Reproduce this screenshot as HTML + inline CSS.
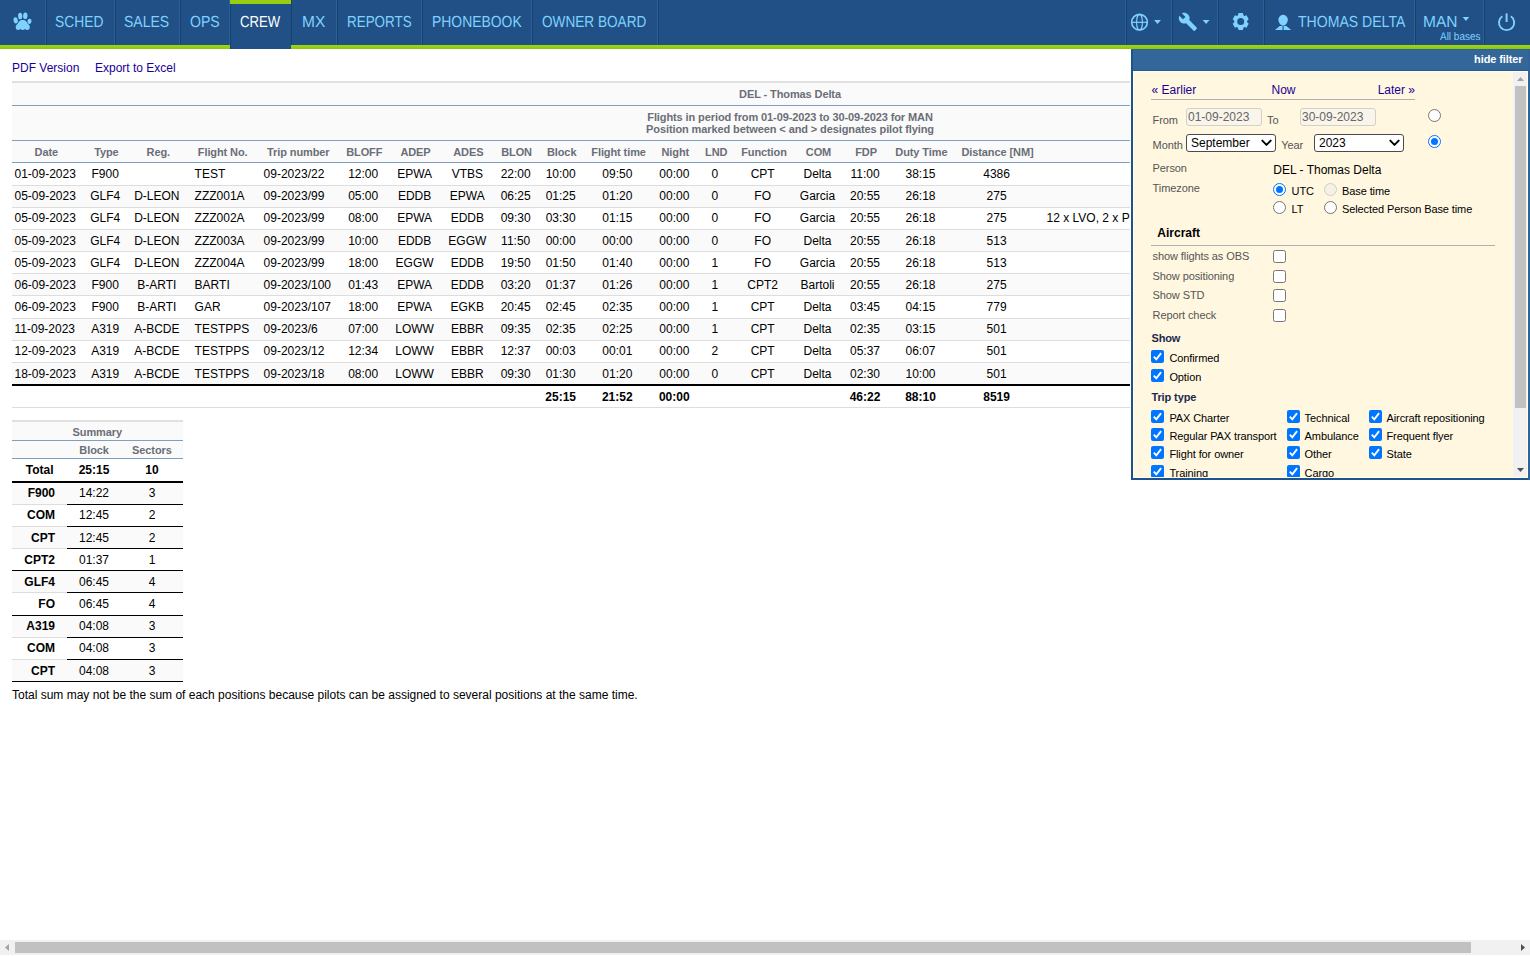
<!DOCTYPE html>
<html><head><meta charset="utf-8"><title>Leon</title><style>
html,body{margin:0;padding:0;background:#fff;overflow:hidden;}
body{width:1530px;height:956px;overflow:hidden;position:relative;font-family:"Liberation Sans", sans-serif;}
.r{position:absolute;}
.t{position:absolute;white-space:nowrap;font-family:"Liberation Sans", sans-serif;}
.nv{text-rendering:geometricPrecision;}
</style></head><body>
<div class="r" style="left:0px;top:0px;width:1530px;height:45px;background:#215086;"></div>
<div class="r" style="left:0px;top:45px;width:1530px;height:4px;background:#97cf10;background:linear-gradient(#a0d80e,#96ce10 50%,#8cc60a);"></div>
<div class="r" style="left:45px;top:0px;width:1px;height:45px;background:#2a5f98;"></div>
<div class="r" style="left:46px;top:0px;width:1px;height:45px;background:#15426f;"></div>
<div class="r" style="left:114px;top:0px;width:1px;height:45px;background:#2a5f98;"></div>
<div class="r" style="left:115px;top:0px;width:1px;height:45px;background:#15426f;"></div>
<div class="r" style="left:179px;top:0px;width:1px;height:45px;background:#2a5f98;"></div>
<div class="r" style="left:180px;top:0px;width:1px;height:45px;background:#15426f;"></div>
<div class="r" style="left:229px;top:0px;width:1px;height:45px;background:#2a5f98;"></div>
<div class="r" style="left:230px;top:0px;width:1px;height:45px;background:#15426f;"></div>
<div class="r" style="left:290px;top:0px;width:1px;height:45px;background:#2a5f98;"></div>
<div class="r" style="left:291px;top:0px;width:1px;height:45px;background:#15426f;"></div>
<div class="r" style="left:336px;top:0px;width:1px;height:45px;background:#2a5f98;"></div>
<div class="r" style="left:337px;top:0px;width:1px;height:45px;background:#15426f;"></div>
<div class="r" style="left:421px;top:0px;width:1px;height:45px;background:#2a5f98;"></div>
<div class="r" style="left:422px;top:0px;width:1px;height:45px;background:#15426f;"></div>
<div class="r" style="left:531px;top:0px;width:1px;height:45px;background:#2a5f98;"></div>
<div class="r" style="left:532px;top:0px;width:1px;height:45px;background:#15426f;"></div>
<div class="r" style="left:657px;top:0px;width:1px;height:45px;background:#2a5f98;"></div>
<div class="r" style="left:658px;top:0px;width:1px;height:45px;background:#15426f;"></div>
<div class="r" style="left:1125px;top:0px;width:1px;height:45px;background:#2a5f98;"></div>
<div class="r" style="left:1126px;top:0px;width:1px;height:45px;background:#15426f;"></div>
<div class="r" style="left:1171px;top:0px;width:1px;height:45px;background:#2a5f98;"></div>
<div class="r" style="left:1172px;top:0px;width:1px;height:45px;background:#15426f;"></div>
<div class="r" style="left:1217px;top:0px;width:1px;height:45px;background:#2a5f98;"></div>
<div class="r" style="left:1218px;top:0px;width:1px;height:45px;background:#15426f;"></div>
<div class="r" style="left:1263px;top:0px;width:1px;height:45px;background:#2a5f98;"></div>
<div class="r" style="left:1264px;top:0px;width:1px;height:45px;background:#15426f;"></div>
<div class="r" style="left:1414px;top:0px;width:1px;height:45px;background:#2a5f98;"></div>
<div class="r" style="left:1415px;top:0px;width:1px;height:45px;background:#15426f;"></div>
<div class="r" style="left:1483px;top:0px;width:1px;height:45px;background:#2a5f98;"></div>
<div class="r" style="left:1484px;top:0px;width:1px;height:45px;background:#15426f;"></div>
<div class="r" style="left:231px;top:0px;width:60px;height:49px;background:#215086;"></div>
<div class="r" style="left:230px;top:4px;width:1px;height:45px;background:#15426f;"></div>
<div class="r" style="left:230px;top:0px;width:61px;height:4px;background:#97cf10;"></div>
<div class="t nv" id="nv0" style="left:55.46px;top:14px;font-size:16px;line-height:17px;color:#7fd2ff;transform:scaleX(0.8641);transform-origin:0 0;">SCHED</div>
<div class="t nv" id="nv1" style="left:124.25px;top:14px;font-size:16px;line-height:17px;color:#7fd2ff;transform:scaleX(0.8755);transform-origin:0 0;">SALES</div>
<div class="t nv" id="nv2" style="left:189.52px;top:14px;font-size:16px;line-height:17px;color:#7fd2ff;transform:scaleX(0.8811);transform-origin:0 0;">OPS</div>
<div class="t nv" id="nv3" style="left:239.55px;top:14px;font-size:16px;line-height:17px;color:#ffffff;transform:scaleX(0.8204);transform-origin:0 0;">CREW</div>
<div class="t nv" id="nv4" style="left:302.35px;top:14px;font-size:16px;line-height:17px;color:#7fd2ff;transform:scaleX(0.9701);transform-origin:0 0;">MX</div>
<div class="t nv" id="nv5" style="left:346.97px;top:14px;font-size:16px;line-height:17px;color:#7fd2ff;transform:scaleX(0.8388);transform-origin:0 0;">REPORTS</div>
<div class="t nv" id="nv6" style="left:431.84px;top:14px;font-size:16px;line-height:17px;color:#7fd2ff;transform:scaleX(0.8696);transform-origin:0 0;">PHONEBOOK</div>
<div class="t nv" id="nv7" style="left:542.25px;top:14px;font-size:16px;line-height:17px;color:#7fd2ff;transform:scaleX(0.8500);transform-origin:0 0;">OWNER BOARD</div>
<div class="t nv" id="nv8" style="left:1298.24px;top:14px;font-size:16px;line-height:17px;color:#7fd2ff;transform:scaleX(0.8790);transform-origin:0 0;">THOMAS DELTA</div>
<div class="t nv" id="nv9" style="left:1422.64px;top:14px;font-size:16px;line-height:17px;color:#7fd2ff;transform:scaleX(0.9707);transform-origin:0 0;">MAN</div>
<div class="t nv" id="nvab" style="left:1440.38px;top:31px;font-size:11px;line-height:12px;color:#7fd2ff;transform:scaleX(0.9056);transform-origin:0 0;">All bases</div>
<svg class="r" style="left:0;top:0" width="1530" height="49" viewBox="0 0 1530 49">
<g fill="#7fd2ff">
<ellipse cx="15.7" cy="20.4" rx="2.15" ry="3.15" transform="rotate(-8 15.7 20.4)"/>
<ellipse cx="20.15" cy="16.05" rx="2.1" ry="3.2" transform="rotate(-3 20.15 16.05)"/>
<ellipse cx="25.3" cy="15.8" rx="2.2" ry="3.25" transform="rotate(3 25.3 15.8)"/>
<ellipse cx="29.5" cy="21.3" rx="2.05" ry="2.65" transform="rotate(8 29.5 21.3)"/>
<path d="M22.7 20.1C26.1 20.1 26.6 22.3 27.6 23.4C29.3 24.9 29.9 26 29.8 27.4C29.7 29.2 28.3 30 27 29.9C26 29.8 25.5 29.3 25.1 29C24.4 29.6 23.6 29.9 22.7 29.9C21.8 29.9 21 29.6 20.3 29C19.9 29.3 19.4 29.8 18.4 29.9C17.1 30 15.8 29.2 15.7 27.4C15.6 26 16.2 24.9 17.9 23.4C18.9 22.3 19.3 20.1 22.7 20.1Z"/>
</g>
<g fill="none" stroke="#7fd2ff">
<circle cx="1139.5" cy="22.2" r="7.8" stroke-width="1.6"/>
<ellipse cx="1139.5" cy="22.2" rx="2.9" ry="7.8" stroke-width="1.1"/>
<path d="M1131.7 22.3h15.6" stroke-width="1.2"/>
</g>
<path fill="#7fd2ff" d="M1154.1 19.9h6.8l-3.4 4.2zM1202.7 19.9h6.800l-3.400 4.200zM1462.700 16.900h6.500l-3.250 4.200z"/>
<g transform="translate(1178 11.9) scale(0.83)"><path fill="#7fd2ff" d="M22.7 19l-9.1-9.1c.9-2.300.4-5-1.500-6.900-2-2-5-2.400-7.400-1.300L9 6 6 9 1.600 4.700C.400 7.100.900 10.100 2.900 12.100c1.900 1.900 4.600 2.400 6.900 1.500l9.100 9.100c.4.400 1 .4 1.400 0l2.300-2.300c.5-.4.500-1.100.1-1.400z"/></g>
<path fill="#7fd2ff" fill-rule="evenodd" d="M1238.00 15.23 L1238.48 13.02 L1242.92 13.02 L1243.40 15.23 L1244.46 15.88 L1246.49 15.21 L1248.71 19.31 L1247.16 20.85 L1247.16 22.15 L1248.71 23.69 L1246.49 27.79 L1244.46 27.12 L1243.40 27.77 L1242.92 29.98 L1238.48 29.98 L1238.00 27.77 L1236.94 27.12 L1234.91 27.79 L1232.69 23.69 L1234.24 22.15 L1234.24 20.85 L1232.69 19.31 L1234.91 15.21 L1236.94 15.88Z M1244.20 21.50 A3.5 3.5 0 1 0 1237.20 21.50 A3.5 3.5 0 1 0 1244.20 21.50Z"/>
<g fill="#7fd2ff">
<path d="M1283.1 14.7C1285.2 14.7 1287.3 16.3 1287.8 19.1C1288.1 21.5 1286 25.8 1283.1 25.8C1280.200 25.800 1278.100 21.500 1278.400 19.100C1278.900 16.300 1281 14.700 1283.100 14.700Z"/>
<path d="M1275 30.100L1279.700 26.100L1282.500 26.100L1282.500 30.100Z"/>
<path d="M1291.100 30.100L1286.400 26.100L1283.600 26.100L1283.600 30.100Z"/>
</g>
<g fill="none" stroke="#7fd2ff" stroke-width="1.9">
<path d="M1502.35 16.20A7.6 7.6 0 1 0 1510.85 16.20"/>
<path d="M1506.600 13.400V22" stroke-width="2"/>
</g>
</svg>
<div class="t" style="left:12px;top:61px;font-size:12px;line-height:14px;color:#1a0096;">PDF Version</div>
<div class="t" style="left:95px;top:61px;font-size:12px;line-height:14px;color:#1a0096;">Export to Excel</div>
<div class="r" style="left:12px;top:81px;width:1518px;height:2px;background:#e0e0e0;"></div>
<div class="r" style="left:12px;top:83px;width:1518px;height:79px;background:#fafafa;"></div>
<div class="r" style="left:12px;top:105px;width:1518px;height:1px;background:#7f9fc2;"></div>
<div class="r" style="left:12px;top:140px;width:1518px;height:1px;background:#7f9fc2;"></div>
<div class="r" style="left:12px;top:162px;width:1518px;height:1px;background:#7f9fc2;"></div>
<div class="t" style="left:490.0px;width:600px;text-align:center;top:88px;font-size:11px;line-height:12px;font-weight:700;letter-spacing:-0.1px;color:#6a6e78;">DEL - Thomas Delta</div>
<div class="t" style="left:490.0px;width:600px;text-align:center;top:111px;font-size:11px;line-height:12px;font-weight:700;letter-spacing:-0.1px;color:#6a6e78;">Flights in period from 01-09-2023 to 30-09-2023 for MAN</div>
<div class="t" style="left:490.0px;width:600px;text-align:center;top:123px;font-size:11px;line-height:12px;font-weight:700;letter-spacing:-0.1px;color:#6a6e78;">Position marked between &lt; and &gt; designates pilot flying</div>
<div class="t" style="left:-53.7px;width:200px;text-align:center;top:146px;font-size:11px;line-height:12px;font-weight:700;letter-spacing:-0.1px;color:#6a6e78;">Date</div>
<div class="t" style="left:6.400000000000006px;width:200px;text-align:center;top:146px;font-size:11px;line-height:12px;font-weight:700;letter-spacing:-0.1px;color:#6a6e78;">Type</div>
<div class="t" style="left:58.30000000000001px;width:200px;text-align:center;top:146px;font-size:11px;line-height:12px;font-weight:700;letter-spacing:-0.1px;color:#6a6e78;">Reg.</div>
<div class="t" style="left:122.69999999999999px;width:200px;text-align:center;top:146px;font-size:11px;line-height:12px;font-weight:700;letter-spacing:-0.1px;color:#6a6e78;">Flight No.</div>
<div class="t" style="left:198.3px;width:200px;text-align:center;top:146px;font-size:11px;line-height:12px;font-weight:700;letter-spacing:-0.1px;color:#6a6e78;">Trip number</div>
<div class="t" style="left:264.3px;width:200px;text-align:center;top:146px;font-size:11px;line-height:12px;font-weight:700;letter-spacing:-0.1px;color:#6a6e78;">BLOFF</div>
<div class="t" style="left:315.5px;width:200px;text-align:center;top:146px;font-size:11px;line-height:12px;font-weight:700;letter-spacing:-0.1px;color:#6a6e78;">ADEP</div>
<div class="t" style="left:368.3px;width:200px;text-align:center;top:146px;font-size:11px;line-height:12px;font-weight:700;letter-spacing:-0.1px;color:#6a6e78;">ADES</div>
<div class="t" style="left:416.6px;width:200px;text-align:center;top:146px;font-size:11px;line-height:12px;font-weight:700;letter-spacing:-0.1px;color:#6a6e78;">BLON</div>
<div class="t" style="left:461.70000000000005px;width:200px;text-align:center;top:146px;font-size:11px;line-height:12px;font-weight:700;letter-spacing:-0.1px;color:#6a6e78;">Block</div>
<div class="t" style="left:518.6px;width:200px;text-align:center;top:146px;font-size:11px;line-height:12px;font-weight:700;letter-spacing:-0.1px;color:#6a6e78;">Flight time</div>
<div class="t" style="left:575.3px;width:200px;text-align:center;top:146px;font-size:11px;line-height:12px;font-weight:700;letter-spacing:-0.1px;color:#6a6e78;">Night</div>
<div class="t" style="left:616.2px;width:200px;text-align:center;top:146px;font-size:11px;line-height:12px;font-weight:700;letter-spacing:-0.1px;color:#6a6e78;">LND</div>
<div class="t" style="left:664.0px;width:200px;text-align:center;top:146px;font-size:11px;line-height:12px;font-weight:700;letter-spacing:-0.1px;color:#6a6e78;">Function</div>
<div class="t" style="left:718.5px;width:200px;text-align:center;top:146px;font-size:11px;line-height:12px;font-weight:700;letter-spacing:-0.1px;color:#6a6e78;">COM</div>
<div class="t" style="left:766.1px;width:200px;text-align:center;top:146px;font-size:11px;line-height:12px;font-weight:700;letter-spacing:-0.1px;color:#6a6e78;">FDP</div>
<div class="t" style="left:821.4px;width:200px;text-align:center;top:146px;font-size:11px;line-height:12px;font-weight:700;letter-spacing:-0.1px;color:#6a6e78;">Duty Time</div>
<div class="t" style="left:897.5px;width:200px;text-align:center;top:146px;font-size:11px;line-height:12px;font-weight:700;letter-spacing:-0.1px;color:#6a6e78;">Distance [NM]</div>
<div class="r" style="left:12px;top:185px;width:1518px;height:1px;background:#dddddd;"></div>
<div class="t" style="left:14.5px;top:167px;font-size:12px;line-height:14px;color:#000;">01-09-2023</div>
<div class="t" style="left:5.200000000000003px;width:200px;text-align:center;top:167px;font-size:12px;line-height:14px;color:#000;">F900</div>
<div class="t" style="left:194.6px;top:167px;font-size:12px;line-height:14px;color:#000;">TEST</div>
<div class="t" style="left:263.6px;top:167px;font-size:12px;line-height:14px;color:#000;">09-2023/22</div>
<div class="t" style="left:263.2px;width:200px;text-align:center;top:167px;font-size:12px;line-height:14px;color:#000;">12:00</div>
<div class="t" style="left:314.6px;width:200px;text-align:center;top:167px;font-size:12px;line-height:14px;color:#000;">EPWA</div>
<div class="t" style="left:367.3px;width:200px;text-align:center;top:167px;font-size:12px;line-height:14px;color:#000;">VTBS</div>
<div class="t" style="left:415.70000000000005px;width:200px;text-align:center;top:167px;font-size:12px;line-height:14px;color:#000;">22:00</div>
<div class="t" style="left:460.70000000000005px;width:200px;text-align:center;top:167px;font-size:12px;line-height:14px;color:#000;">10:00</div>
<div class="t" style="left:517.3px;width:200px;text-align:center;top:167px;font-size:12px;line-height:14px;color:#000;">09:50</div>
<div class="t" style="left:574.3px;width:200px;text-align:center;top:167px;font-size:12px;line-height:14px;color:#000;">00:00</div>
<div class="t" style="left:614.8px;width:200px;text-align:center;top:167px;font-size:12px;line-height:14px;color:#000;">0</div>
<div class="t" style="left:662.7px;width:200px;text-align:center;top:167px;font-size:12px;line-height:14px;color:#000;">CPT</div>
<div class="t" style="left:717.5px;width:200px;text-align:center;top:167px;font-size:12px;line-height:14px;color:#000;">Delta</div>
<div class="t" style="left:765.0px;width:200px;text-align:center;top:167px;font-size:12px;line-height:14px;color:#000;">11:00</div>
<div class="t" style="left:820.5px;width:200px;text-align:center;top:167px;font-size:12px;line-height:14px;color:#000;">38:15</div>
<div class="t" style="left:896.6px;width:200px;text-align:center;top:167px;font-size:12px;line-height:14px;color:#000;">4386</div>
<div class="r" style="left:12px;top:186px;width:1518px;height:21px;background:#fafafa;"></div>
<div class="r" style="left:12px;top:207px;width:1518px;height:1px;background:#dddddd;"></div>
<div class="t" style="left:14.5px;top:189px;font-size:12px;line-height:14px;color:#000;">05-09-2023</div>
<div class="t" style="left:5.200000000000003px;width:200px;text-align:center;top:189px;font-size:12px;line-height:14px;color:#000;">GLF4</div>
<div class="t" style="left:56.80000000000001px;width:200px;text-align:center;top:189px;font-size:12px;line-height:14px;color:#000;">D-LEON</div>
<div class="t" style="left:194.6px;top:189px;font-size:12px;line-height:14px;color:#000;">ZZZ001A</div>
<div class="t" style="left:263.6px;top:189px;font-size:12px;line-height:14px;color:#000;">09-2023/99</div>
<div class="t" style="left:263.2px;width:200px;text-align:center;top:189px;font-size:12px;line-height:14px;color:#000;">05:00</div>
<div class="t" style="left:314.6px;width:200px;text-align:center;top:189px;font-size:12px;line-height:14px;color:#000;">EDDB</div>
<div class="t" style="left:367.3px;width:200px;text-align:center;top:189px;font-size:12px;line-height:14px;color:#000;">EPWA</div>
<div class="t" style="left:415.70000000000005px;width:200px;text-align:center;top:189px;font-size:12px;line-height:14px;color:#000;">06:25</div>
<div class="t" style="left:460.70000000000005px;width:200px;text-align:center;top:189px;font-size:12px;line-height:14px;color:#000;">01:25</div>
<div class="t" style="left:517.3px;width:200px;text-align:center;top:189px;font-size:12px;line-height:14px;color:#000;">01:20</div>
<div class="t" style="left:574.3px;width:200px;text-align:center;top:189px;font-size:12px;line-height:14px;color:#000;">00:00</div>
<div class="t" style="left:614.8px;width:200px;text-align:center;top:189px;font-size:12px;line-height:14px;color:#000;">0</div>
<div class="t" style="left:662.7px;width:200px;text-align:center;top:189px;font-size:12px;line-height:14px;color:#000;">FO</div>
<div class="t" style="left:717.5px;width:200px;text-align:center;top:189px;font-size:12px;line-height:14px;color:#000;">Garcia</div>
<div class="t" style="left:765.0px;width:200px;text-align:center;top:189px;font-size:12px;line-height:14px;color:#000;">20:55</div>
<div class="t" style="left:820.5px;width:200px;text-align:center;top:189px;font-size:12px;line-height:14px;color:#000;">26:18</div>
<div class="t" style="left:896.6px;width:200px;text-align:center;top:189px;font-size:12px;line-height:14px;color:#000;">275</div>
<div class="r" style="left:12px;top:229px;width:1518px;height:1px;background:#dddddd;"></div>
<div class="t" style="left:14.5px;top:211px;font-size:12px;line-height:14px;color:#000;">05-09-2023</div>
<div class="t" style="left:5.200000000000003px;width:200px;text-align:center;top:211px;font-size:12px;line-height:14px;color:#000;">GLF4</div>
<div class="t" style="left:56.80000000000001px;width:200px;text-align:center;top:211px;font-size:12px;line-height:14px;color:#000;">D-LEON</div>
<div class="t" style="left:194.6px;top:211px;font-size:12px;line-height:14px;color:#000;">ZZZ002A</div>
<div class="t" style="left:263.6px;top:211px;font-size:12px;line-height:14px;color:#000;">09-2023/99</div>
<div class="t" style="left:263.2px;width:200px;text-align:center;top:211px;font-size:12px;line-height:14px;color:#000;">08:00</div>
<div class="t" style="left:314.6px;width:200px;text-align:center;top:211px;font-size:12px;line-height:14px;color:#000;">EPWA</div>
<div class="t" style="left:367.3px;width:200px;text-align:center;top:211px;font-size:12px;line-height:14px;color:#000;">EDDB</div>
<div class="t" style="left:415.70000000000005px;width:200px;text-align:center;top:211px;font-size:12px;line-height:14px;color:#000;">09:30</div>
<div class="t" style="left:460.70000000000005px;width:200px;text-align:center;top:211px;font-size:12px;line-height:14px;color:#000;">03:30</div>
<div class="t" style="left:517.3px;width:200px;text-align:center;top:211px;font-size:12px;line-height:14px;color:#000;">01:15</div>
<div class="t" style="left:574.3px;width:200px;text-align:center;top:211px;font-size:12px;line-height:14px;color:#000;">00:00</div>
<div class="t" style="left:614.8px;width:200px;text-align:center;top:211px;font-size:12px;line-height:14px;color:#000;">0</div>
<div class="t" style="left:662.7px;width:200px;text-align:center;top:211px;font-size:12px;line-height:14px;color:#000;">FO</div>
<div class="t" style="left:717.5px;width:200px;text-align:center;top:211px;font-size:12px;line-height:14px;color:#000;">Garcia</div>
<div class="t" style="left:765.0px;width:200px;text-align:center;top:211px;font-size:12px;line-height:14px;color:#000;">20:55</div>
<div class="t" style="left:820.5px;width:200px;text-align:center;top:211px;font-size:12px;line-height:14px;color:#000;">26:18</div>
<div class="t" style="left:896.6px;width:200px;text-align:center;top:211px;font-size:12px;line-height:14px;color:#000;">275</div>
<div class="t" style="left:1046.5px;top:211px;font-size:12px;line-height:14px;color:#000;">12 x LVO, 2 x PRM</div>
<div class="r" style="left:12px;top:230px;width:1518px;height:21px;background:#fafafa;"></div>
<div class="r" style="left:12px;top:251px;width:1518px;height:1px;background:#dddddd;"></div>
<div class="t" style="left:14.5px;top:234px;font-size:12px;line-height:14px;color:#000;">05-09-2023</div>
<div class="t" style="left:5.200000000000003px;width:200px;text-align:center;top:234px;font-size:12px;line-height:14px;color:#000;">GLF4</div>
<div class="t" style="left:56.80000000000001px;width:200px;text-align:center;top:234px;font-size:12px;line-height:14px;color:#000;">D-LEON</div>
<div class="t" style="left:194.6px;top:234px;font-size:12px;line-height:14px;color:#000;">ZZZ003A</div>
<div class="t" style="left:263.6px;top:234px;font-size:12px;line-height:14px;color:#000;">09-2023/99</div>
<div class="t" style="left:263.2px;width:200px;text-align:center;top:234px;font-size:12px;line-height:14px;color:#000;">10:00</div>
<div class="t" style="left:314.6px;width:200px;text-align:center;top:234px;font-size:12px;line-height:14px;color:#000;">EDDB</div>
<div class="t" style="left:367.3px;width:200px;text-align:center;top:234px;font-size:12px;line-height:14px;color:#000;">EGGW</div>
<div class="t" style="left:415.70000000000005px;width:200px;text-align:center;top:234px;font-size:12px;line-height:14px;color:#000;">11:50</div>
<div class="t" style="left:460.70000000000005px;width:200px;text-align:center;top:234px;font-size:12px;line-height:14px;color:#000;">00:00</div>
<div class="t" style="left:517.3px;width:200px;text-align:center;top:234px;font-size:12px;line-height:14px;color:#000;">00:00</div>
<div class="t" style="left:574.3px;width:200px;text-align:center;top:234px;font-size:12px;line-height:14px;color:#000;">00:00</div>
<div class="t" style="left:614.8px;width:200px;text-align:center;top:234px;font-size:12px;line-height:14px;color:#000;">0</div>
<div class="t" style="left:662.7px;width:200px;text-align:center;top:234px;font-size:12px;line-height:14px;color:#000;">FO</div>
<div class="t" style="left:717.5px;width:200px;text-align:center;top:234px;font-size:12px;line-height:14px;color:#000;">Delta</div>
<div class="t" style="left:765.0px;width:200px;text-align:center;top:234px;font-size:12px;line-height:14px;color:#000;">20:55</div>
<div class="t" style="left:820.5px;width:200px;text-align:center;top:234px;font-size:12px;line-height:14px;color:#000;">26:18</div>
<div class="t" style="left:896.6px;width:200px;text-align:center;top:234px;font-size:12px;line-height:14px;color:#000;">513</div>
<div class="r" style="left:12px;top:273px;width:1518px;height:1px;background:#dddddd;"></div>
<div class="t" style="left:14.5px;top:256px;font-size:12px;line-height:14px;color:#000;">05-09-2023</div>
<div class="t" style="left:5.200000000000003px;width:200px;text-align:center;top:256px;font-size:12px;line-height:14px;color:#000;">GLF4</div>
<div class="t" style="left:56.80000000000001px;width:200px;text-align:center;top:256px;font-size:12px;line-height:14px;color:#000;">D-LEON</div>
<div class="t" style="left:194.6px;top:256px;font-size:12px;line-height:14px;color:#000;">ZZZ004A</div>
<div class="t" style="left:263.6px;top:256px;font-size:12px;line-height:14px;color:#000;">09-2023/99</div>
<div class="t" style="left:263.2px;width:200px;text-align:center;top:256px;font-size:12px;line-height:14px;color:#000;">18:00</div>
<div class="t" style="left:314.6px;width:200px;text-align:center;top:256px;font-size:12px;line-height:14px;color:#000;">EGGW</div>
<div class="t" style="left:367.3px;width:200px;text-align:center;top:256px;font-size:12px;line-height:14px;color:#000;">EDDB</div>
<div class="t" style="left:415.70000000000005px;width:200px;text-align:center;top:256px;font-size:12px;line-height:14px;color:#000;">19:50</div>
<div class="t" style="left:460.70000000000005px;width:200px;text-align:center;top:256px;font-size:12px;line-height:14px;color:#000;">01:50</div>
<div class="t" style="left:517.3px;width:200px;text-align:center;top:256px;font-size:12px;line-height:14px;color:#000;">01:40</div>
<div class="t" style="left:574.3px;width:200px;text-align:center;top:256px;font-size:12px;line-height:14px;color:#000;">00:00</div>
<div class="t" style="left:614.8px;width:200px;text-align:center;top:256px;font-size:12px;line-height:14px;color:#000;">1</div>
<div class="t" style="left:662.7px;width:200px;text-align:center;top:256px;font-size:12px;line-height:14px;color:#000;">FO</div>
<div class="t" style="left:717.5px;width:200px;text-align:center;top:256px;font-size:12px;line-height:14px;color:#000;">Garcia</div>
<div class="t" style="left:765.0px;width:200px;text-align:center;top:256px;font-size:12px;line-height:14px;color:#000;">20:55</div>
<div class="t" style="left:820.5px;width:200px;text-align:center;top:256px;font-size:12px;line-height:14px;color:#000;">26:18</div>
<div class="t" style="left:896.6px;width:200px;text-align:center;top:256px;font-size:12px;line-height:14px;color:#000;">513</div>
<div class="r" style="left:12px;top:274px;width:1518px;height:21px;background:#fafafa;"></div>
<div class="r" style="left:12px;top:295px;width:1518px;height:1px;background:#dddddd;"></div>
<div class="t" style="left:14.5px;top:278px;font-size:12px;line-height:14px;color:#000;">06-09-2023</div>
<div class="t" style="left:5.200000000000003px;width:200px;text-align:center;top:278px;font-size:12px;line-height:14px;color:#000;">F900</div>
<div class="t" style="left:56.80000000000001px;width:200px;text-align:center;top:278px;font-size:12px;line-height:14px;color:#000;">B-ARTI</div>
<div class="t" style="left:194.6px;top:278px;font-size:12px;line-height:14px;color:#000;">BARTI</div>
<div class="t" style="left:263.6px;top:278px;font-size:12px;line-height:14px;color:#000;">09-2023/100</div>
<div class="t" style="left:263.2px;width:200px;text-align:center;top:278px;font-size:12px;line-height:14px;color:#000;">01:43</div>
<div class="t" style="left:314.6px;width:200px;text-align:center;top:278px;font-size:12px;line-height:14px;color:#000;">EPWA</div>
<div class="t" style="left:367.3px;width:200px;text-align:center;top:278px;font-size:12px;line-height:14px;color:#000;">EDDB</div>
<div class="t" style="left:415.70000000000005px;width:200px;text-align:center;top:278px;font-size:12px;line-height:14px;color:#000;">03:20</div>
<div class="t" style="left:460.70000000000005px;width:200px;text-align:center;top:278px;font-size:12px;line-height:14px;color:#000;">01:37</div>
<div class="t" style="left:517.3px;width:200px;text-align:center;top:278px;font-size:12px;line-height:14px;color:#000;">01:26</div>
<div class="t" style="left:574.3px;width:200px;text-align:center;top:278px;font-size:12px;line-height:14px;color:#000;">00:00</div>
<div class="t" style="left:614.8px;width:200px;text-align:center;top:278px;font-size:12px;line-height:14px;color:#000;">1</div>
<div class="t" style="left:662.7px;width:200px;text-align:center;top:278px;font-size:12px;line-height:14px;color:#000;">CPT2</div>
<div class="t" style="left:717.5px;width:200px;text-align:center;top:278px;font-size:12px;line-height:14px;color:#000;">Bartoli</div>
<div class="t" style="left:765.0px;width:200px;text-align:center;top:278px;font-size:12px;line-height:14px;color:#000;">20:55</div>
<div class="t" style="left:820.5px;width:200px;text-align:center;top:278px;font-size:12px;line-height:14px;color:#000;">26:18</div>
<div class="t" style="left:896.6px;width:200px;text-align:center;top:278px;font-size:12px;line-height:14px;color:#000;">275</div>
<div class="r" style="left:12px;top:318px;width:1518px;height:1px;background:#dddddd;"></div>
<div class="t" style="left:14.5px;top:300px;font-size:12px;line-height:14px;color:#000;">06-09-2023</div>
<div class="t" style="left:5.200000000000003px;width:200px;text-align:center;top:300px;font-size:12px;line-height:14px;color:#000;">F900</div>
<div class="t" style="left:56.80000000000001px;width:200px;text-align:center;top:300px;font-size:12px;line-height:14px;color:#000;">B-ARTI</div>
<div class="t" style="left:194.6px;top:300px;font-size:12px;line-height:14px;color:#000;">GAR</div>
<div class="t" style="left:263.6px;top:300px;font-size:12px;line-height:14px;color:#000;">09-2023/107</div>
<div class="t" style="left:263.2px;width:200px;text-align:center;top:300px;font-size:12px;line-height:14px;color:#000;">18:00</div>
<div class="t" style="left:314.6px;width:200px;text-align:center;top:300px;font-size:12px;line-height:14px;color:#000;">EPWA</div>
<div class="t" style="left:367.3px;width:200px;text-align:center;top:300px;font-size:12px;line-height:14px;color:#000;">EGKB</div>
<div class="t" style="left:415.70000000000005px;width:200px;text-align:center;top:300px;font-size:12px;line-height:14px;color:#000;">20:45</div>
<div class="t" style="left:460.70000000000005px;width:200px;text-align:center;top:300px;font-size:12px;line-height:14px;color:#000;">02:45</div>
<div class="t" style="left:517.3px;width:200px;text-align:center;top:300px;font-size:12px;line-height:14px;color:#000;">02:35</div>
<div class="t" style="left:574.3px;width:200px;text-align:center;top:300px;font-size:12px;line-height:14px;color:#000;">00:00</div>
<div class="t" style="left:614.8px;width:200px;text-align:center;top:300px;font-size:12px;line-height:14px;color:#000;">1</div>
<div class="t" style="left:662.7px;width:200px;text-align:center;top:300px;font-size:12px;line-height:14px;color:#000;">CPT</div>
<div class="t" style="left:717.5px;width:200px;text-align:center;top:300px;font-size:12px;line-height:14px;color:#000;">Delta</div>
<div class="t" style="left:765.0px;width:200px;text-align:center;top:300px;font-size:12px;line-height:14px;color:#000;">03:45</div>
<div class="t" style="left:820.5px;width:200px;text-align:center;top:300px;font-size:12px;line-height:14px;color:#000;">04:15</div>
<div class="t" style="left:896.6px;width:200px;text-align:center;top:300px;font-size:12px;line-height:14px;color:#000;">779</div>
<div class="r" style="left:12px;top:319px;width:1518px;height:21px;background:#fafafa;"></div>
<div class="r" style="left:12px;top:340px;width:1518px;height:1px;background:#dddddd;"></div>
<div class="t" style="left:14.5px;top:322px;font-size:12px;line-height:14px;color:#000;">11-09-2023</div>
<div class="t" style="left:5.200000000000003px;width:200px;text-align:center;top:322px;font-size:12px;line-height:14px;color:#000;">A319</div>
<div class="t" style="left:56.80000000000001px;width:200px;text-align:center;top:322px;font-size:12px;line-height:14px;color:#000;">A-BCDE</div>
<div class="t" style="left:194.6px;top:322px;font-size:12px;line-height:14px;color:#000;">TESTPPS</div>
<div class="t" style="left:263.6px;top:322px;font-size:12px;line-height:14px;color:#000;">09-2023/6</div>
<div class="t" style="left:263.2px;width:200px;text-align:center;top:322px;font-size:12px;line-height:14px;color:#000;">07:00</div>
<div class="t" style="left:314.6px;width:200px;text-align:center;top:322px;font-size:12px;line-height:14px;color:#000;">LOWW</div>
<div class="t" style="left:367.3px;width:200px;text-align:center;top:322px;font-size:12px;line-height:14px;color:#000;">EBBR</div>
<div class="t" style="left:415.70000000000005px;width:200px;text-align:center;top:322px;font-size:12px;line-height:14px;color:#000;">09:35</div>
<div class="t" style="left:460.70000000000005px;width:200px;text-align:center;top:322px;font-size:12px;line-height:14px;color:#000;">02:35</div>
<div class="t" style="left:517.3px;width:200px;text-align:center;top:322px;font-size:12px;line-height:14px;color:#000;">02:25</div>
<div class="t" style="left:574.3px;width:200px;text-align:center;top:322px;font-size:12px;line-height:14px;color:#000;">00:00</div>
<div class="t" style="left:614.8px;width:200px;text-align:center;top:322px;font-size:12px;line-height:14px;color:#000;">1</div>
<div class="t" style="left:662.7px;width:200px;text-align:center;top:322px;font-size:12px;line-height:14px;color:#000;">CPT</div>
<div class="t" style="left:717.5px;width:200px;text-align:center;top:322px;font-size:12px;line-height:14px;color:#000;">Delta</div>
<div class="t" style="left:765.0px;width:200px;text-align:center;top:322px;font-size:12px;line-height:14px;color:#000;">02:35</div>
<div class="t" style="left:820.5px;width:200px;text-align:center;top:322px;font-size:12px;line-height:14px;color:#000;">03:15</div>
<div class="t" style="left:896.6px;width:200px;text-align:center;top:322px;font-size:12px;line-height:14px;color:#000;">501</div>
<div class="r" style="left:12px;top:362px;width:1518px;height:1px;background:#dddddd;"></div>
<div class="t" style="left:14.5px;top:344px;font-size:12px;line-height:14px;color:#000;">12-09-2023</div>
<div class="t" style="left:5.200000000000003px;width:200px;text-align:center;top:344px;font-size:12px;line-height:14px;color:#000;">A319</div>
<div class="t" style="left:56.80000000000001px;width:200px;text-align:center;top:344px;font-size:12px;line-height:14px;color:#000;">A-BCDE</div>
<div class="t" style="left:194.6px;top:344px;font-size:12px;line-height:14px;color:#000;">TESTPPS</div>
<div class="t" style="left:263.6px;top:344px;font-size:12px;line-height:14px;color:#000;">09-2023/12</div>
<div class="t" style="left:263.2px;width:200px;text-align:center;top:344px;font-size:12px;line-height:14px;color:#000;">12:34</div>
<div class="t" style="left:314.6px;width:200px;text-align:center;top:344px;font-size:12px;line-height:14px;color:#000;">LOWW</div>
<div class="t" style="left:367.3px;width:200px;text-align:center;top:344px;font-size:12px;line-height:14px;color:#000;">EBBR</div>
<div class="t" style="left:415.70000000000005px;width:200px;text-align:center;top:344px;font-size:12px;line-height:14px;color:#000;">12:37</div>
<div class="t" style="left:460.70000000000005px;width:200px;text-align:center;top:344px;font-size:12px;line-height:14px;color:#000;">00:03</div>
<div class="t" style="left:517.3px;width:200px;text-align:center;top:344px;font-size:12px;line-height:14px;color:#000;">00:01</div>
<div class="t" style="left:574.3px;width:200px;text-align:center;top:344px;font-size:12px;line-height:14px;color:#000;">00:00</div>
<div class="t" style="left:614.8px;width:200px;text-align:center;top:344px;font-size:12px;line-height:14px;color:#000;">2</div>
<div class="t" style="left:662.7px;width:200px;text-align:center;top:344px;font-size:12px;line-height:14px;color:#000;">CPT</div>
<div class="t" style="left:717.5px;width:200px;text-align:center;top:344px;font-size:12px;line-height:14px;color:#000;">Delta</div>
<div class="t" style="left:765.0px;width:200px;text-align:center;top:344px;font-size:12px;line-height:14px;color:#000;">05:37</div>
<div class="t" style="left:820.5px;width:200px;text-align:center;top:344px;font-size:12px;line-height:14px;color:#000;">06:07</div>
<div class="t" style="left:896.6px;width:200px;text-align:center;top:344px;font-size:12px;line-height:14px;color:#000;">501</div>
<div class="r" style="left:12px;top:363px;width:1518px;height:21px;background:#fafafa;"></div>
<div class="t" style="left:14.5px;top:367px;font-size:12px;line-height:14px;color:#000;">18-09-2023</div>
<div class="t" style="left:5.200000000000003px;width:200px;text-align:center;top:367px;font-size:12px;line-height:14px;color:#000;">A319</div>
<div class="t" style="left:56.80000000000001px;width:200px;text-align:center;top:367px;font-size:12px;line-height:14px;color:#000;">A-BCDE</div>
<div class="t" style="left:194.6px;top:367px;font-size:12px;line-height:14px;color:#000;">TESTPPS</div>
<div class="t" style="left:263.6px;top:367px;font-size:12px;line-height:14px;color:#000;">09-2023/18</div>
<div class="t" style="left:263.2px;width:200px;text-align:center;top:367px;font-size:12px;line-height:14px;color:#000;">08:00</div>
<div class="t" style="left:314.6px;width:200px;text-align:center;top:367px;font-size:12px;line-height:14px;color:#000;">LOWW</div>
<div class="t" style="left:367.3px;width:200px;text-align:center;top:367px;font-size:12px;line-height:14px;color:#000;">EBBR</div>
<div class="t" style="left:415.70000000000005px;width:200px;text-align:center;top:367px;font-size:12px;line-height:14px;color:#000;">09:30</div>
<div class="t" style="left:460.70000000000005px;width:200px;text-align:center;top:367px;font-size:12px;line-height:14px;color:#000;">01:30</div>
<div class="t" style="left:517.3px;width:200px;text-align:center;top:367px;font-size:12px;line-height:14px;color:#000;">01:20</div>
<div class="t" style="left:574.3px;width:200px;text-align:center;top:367px;font-size:12px;line-height:14px;color:#000;">00:00</div>
<div class="t" style="left:614.8px;width:200px;text-align:center;top:367px;font-size:12px;line-height:14px;color:#000;">0</div>
<div class="t" style="left:662.7px;width:200px;text-align:center;top:367px;font-size:12px;line-height:14px;color:#000;">CPT</div>
<div class="t" style="left:717.5px;width:200px;text-align:center;top:367px;font-size:12px;line-height:14px;color:#000;">Delta</div>
<div class="t" style="left:765.0px;width:200px;text-align:center;top:367px;font-size:12px;line-height:14px;color:#000;">02:30</div>
<div class="t" style="left:820.5px;width:200px;text-align:center;top:367px;font-size:12px;line-height:14px;color:#000;">10:00</div>
<div class="t" style="left:896.6px;width:200px;text-align:center;top:367px;font-size:12px;line-height:14px;color:#000;">501</div>
<div class="r" style="left:12px;top:384px;width:1518px;height:2px;background:#000;"></div>
<div class="r" style="left:12px;top:407px;width:1518px;height:1px;background:#dddddd;"></div>
<div class="t" style="left:460.70000000000005px;width:200px;text-align:center;top:390px;font-size:12px;line-height:14px;font-weight:700;color:#000;">25:15</div>
<div class="t" style="left:517.3px;width:200px;text-align:center;top:390px;font-size:12px;line-height:14px;font-weight:700;color:#000;">21:52</div>
<div class="t" style="left:574.3px;width:200px;text-align:center;top:390px;font-size:12px;line-height:14px;font-weight:700;color:#000;">00:00</div>
<div class="t" style="left:765.0px;width:200px;text-align:center;top:390px;font-size:12px;line-height:14px;font-weight:700;color:#000;">46:22</div>
<div class="t" style="left:820.5px;width:200px;text-align:center;top:390px;font-size:12px;line-height:14px;font-weight:700;color:#000;">88:10</div>
<div class="t" style="left:896.6px;width:200px;text-align:center;top:390px;font-size:12px;line-height:14px;font-weight:700;color:#000;">8519</div>
<div class="r" style="left:12px;top:420px;width:171px;height:2px;background:#e0e0e0;"></div>
<div class="r" style="left:12px;top:422px;width:171px;height:36px;background:#fafafa;"></div>
<div class="r" style="left:12px;top:440px;width:171px;height:1px;background:#7f9fc2;"></div>
<div class="r" style="left:12px;top:458px;width:171px;height:1px;background:#7f9fc2;"></div>
<div class="t" style="left:17.299999999999997px;width:160px;text-align:center;top:426px;font-size:11px;line-height:12px;font-weight:700;letter-spacing:-0.1px;color:#6a6e78;">Summary</div>
<div class="t" style="left:44.099999999999994px;width:100px;text-align:center;top:444px;font-size:11px;line-height:12px;font-weight:700;letter-spacing:-0.1px;color:#6a6e78;">Block</div>
<div class="t" style="left:101.9px;width:100px;text-align:center;top:444px;font-size:11px;line-height:12px;font-weight:700;letter-spacing:-0.1px;color:#6a6e78;">Sectors</div>
<div class="t" style="left:-6.5px;width:60px;text-align:right;top:463px;font-size:12px;line-height:14px;font-weight:700;color:#000;">Total</div>
<div class="t" style="left:64.0px;width:60px;text-align:center;top:463px;font-size:12px;line-height:14px;font-weight:700;color:#000;">25:15</div>
<div class="t" style="left:122.0px;width:60px;text-align:center;top:463px;font-size:12px;line-height:14px;font-weight:700;color:#000;">10</div>
<div class="r" style="left:12px;top:481px;width:171px;height:2px;background:#000;"></div>
<div class="r" style="left:12px;top:483px;width:171px;height:21px;background:#fafafa;"></div>
<div class="r" style="left:12px;top:504px;width:55px;height:1px;background:#dddddd;"></div>
<div class="r" style="left:67px;top:504px;width:116px;height:1px;background:#000;"></div>
<div class="t" style="left:-5px;width:60px;text-align:right;top:486px;font-size:12px;line-height:14px;font-weight:700;color:#000;">F900</div>
<div class="t" style="left:64.0px;width:60px;text-align:center;top:486px;font-size:12px;line-height:14px;color:#000;">14:22</div>
<div class="t" style="left:122.0px;width:60px;text-align:center;top:486px;font-size:12px;line-height:14px;color:#000;">3</div>
<div class="r" style="left:12px;top:526px;width:55px;height:1px;background:#dddddd;"></div>
<div class="r" style="left:67px;top:526px;width:116px;height:1px;background:#000;"></div>
<div class="t" style="left:-5px;width:60px;text-align:right;top:508px;font-size:12px;line-height:14px;font-weight:700;color:#000;">COM</div>
<div class="t" style="left:64.0px;width:60px;text-align:center;top:508px;font-size:12px;line-height:14px;color:#000;">12:45</div>
<div class="t" style="left:122.0px;width:60px;text-align:center;top:508px;font-size:12px;line-height:14px;color:#000;">2</div>
<div class="r" style="left:12px;top:527px;width:171px;height:21px;background:#fafafa;"></div>
<div class="r" style="left:12px;top:548px;width:55px;height:1px;background:#dddddd;"></div>
<div class="r" style="left:67px;top:548px;width:116px;height:1px;background:#000;"></div>
<div class="t" style="left:-5px;width:60px;text-align:right;top:531px;font-size:12px;line-height:14px;font-weight:700;color:#000;">CPT</div>
<div class="t" style="left:64.0px;width:60px;text-align:center;top:531px;font-size:12px;line-height:14px;color:#000;">12:45</div>
<div class="t" style="left:122.0px;width:60px;text-align:center;top:531px;font-size:12px;line-height:14px;color:#000;">2</div>
<div class="r" style="left:12px;top:570px;width:171px;height:1px;background:#000;"></div>
<div class="t" style="left:-5px;width:60px;text-align:right;top:553px;font-size:12px;line-height:14px;font-weight:700;color:#000;">CPT2</div>
<div class="t" style="left:64.0px;width:60px;text-align:center;top:553px;font-size:12px;line-height:14px;color:#000;">01:37</div>
<div class="t" style="left:122.0px;width:60px;text-align:center;top:553px;font-size:12px;line-height:14px;color:#000;">1</div>
<div class="r" style="left:12px;top:571px;width:171px;height:21px;background:#fafafa;"></div>
<div class="r" style="left:12px;top:592px;width:55px;height:1px;background:#dddddd;"></div>
<div class="r" style="left:67px;top:592px;width:116px;height:1px;background:#000;"></div>
<div class="t" style="left:-5px;width:60px;text-align:right;top:575px;font-size:12px;line-height:14px;font-weight:700;color:#000;">GLF4</div>
<div class="t" style="left:64.0px;width:60px;text-align:center;top:575px;font-size:12px;line-height:14px;color:#000;">06:45</div>
<div class="t" style="left:122.0px;width:60px;text-align:center;top:575px;font-size:12px;line-height:14px;color:#000;">4</div>
<div class="r" style="left:12px;top:615px;width:171px;height:1px;background:#000;"></div>
<div class="t" style="left:-5px;width:60px;text-align:right;top:597px;font-size:12px;line-height:14px;font-weight:700;color:#000;">FO</div>
<div class="t" style="left:64.0px;width:60px;text-align:center;top:597px;font-size:12px;line-height:14px;color:#000;">06:45</div>
<div class="t" style="left:122.0px;width:60px;text-align:center;top:597px;font-size:12px;line-height:14px;color:#000;">4</div>
<div class="r" style="left:12px;top:616px;width:171px;height:21px;background:#fafafa;"></div>
<div class="r" style="left:12px;top:637px;width:55px;height:1px;background:#dddddd;"></div>
<div class="r" style="left:67px;top:637px;width:116px;height:1px;background:#000;"></div>
<div class="t" style="left:-5px;width:60px;text-align:right;top:619px;font-size:12px;line-height:14px;font-weight:700;color:#000;">A319</div>
<div class="t" style="left:64.0px;width:60px;text-align:center;top:619px;font-size:12px;line-height:14px;color:#000;">04:08</div>
<div class="t" style="left:122.0px;width:60px;text-align:center;top:619px;font-size:12px;line-height:14px;color:#000;">3</div>
<div class="r" style="left:12px;top:659px;width:55px;height:1px;background:#dddddd;"></div>
<div class="r" style="left:67px;top:659px;width:116px;height:1px;background:#000;"></div>
<div class="t" style="left:-5px;width:60px;text-align:right;top:641px;font-size:12px;line-height:14px;font-weight:700;color:#000;">COM</div>
<div class="t" style="left:64.0px;width:60px;text-align:center;top:641px;font-size:12px;line-height:14px;color:#000;">04:08</div>
<div class="t" style="left:122.0px;width:60px;text-align:center;top:641px;font-size:12px;line-height:14px;color:#000;">3</div>
<div class="r" style="left:12px;top:660px;width:171px;height:21px;background:#fafafa;"></div>
<div class="r" style="left:12px;top:681px;width:171px;height:1px;background:#000;"></div>
<div class="t" style="left:-5px;width:60px;text-align:right;top:664px;font-size:12px;line-height:14px;font-weight:700;color:#000;">CPT</div>
<div class="t" style="left:64.0px;width:60px;text-align:center;top:664px;font-size:12px;line-height:14px;color:#000;">04:08</div>
<div class="t" style="left:122.0px;width:60px;text-align:center;top:664px;font-size:12px;line-height:14px;color:#000;">3</div>
<div class="t" style="left:12px;top:688px;font-size:12px;line-height:14px;color:#000;">Total sum may not be the sum of each positions because pilots can be assigned to several positions at the same time.</div>
<div class="r" style="left:0px;top:940px;width:1530px;height:15px;background:#f1f1f1;"></div>
<div class="r" style="left:15px;top:942px;width:1456px;height:11px;background:#c1c1c1;"></div>
<svg class="r" style="left:4px;top:943px" width="7" height="10"><polygon points="1,4.5 5,1 5,8" fill="#a3a3a3"/></svg>
<svg class="r" style="left:1520px;top:943px" width="7" height="10"><polygon points="5,4.5 1,1 1,8" fill="#505050"/></svg>
<div class="r" style="left:1130px;top:49px;width:1px;height:432px;background:#fff;"></div>
<div class="r" style="left:1131px;top:49px;width:399px;height:431px;background:#1f538f;"></div>
<div class="r" style="left:1528px;top:49px;width:2px;height:431px;background:#2f639a;"></div>
<div class="r" style="left:1133px;top:49px;width:395px;height:21px;background:#336699;"></div>
<div class="r" style="left:1133px;top:70px;width:395px;height:1px;background:#255a96;"></div>
<div class="r" style="left:1131px;top:49px;width:399px;height:1px;background:#2c5fa0;"></div>
<div class="r" style="left:1133px;top:71px;width:395px;height:407px;background:#ffffe6;"></div>
<div class="r" style="left:1134px;top:72px;width:379px;height:405px;background:#fff7e0;"></div>
<div class="t" style="left:1422.5px;width:100px;text-align:right;top:53px;font-size:11px;line-height:12px;font-weight:700;letter-spacing:-0.1px;color:#fff;">hide filter</div>
<div class="r" style="left:1513px;top:72px;width:14px;height:405px;background:#f1f1f1;"></div>
<div class="r" style="left:1515px;top:86px;width:11px;height:322px;background:#c1c1c1;"></div>
<svg class="r" style="left:1516px;top:76px" width="10" height="7"><polygon points="4.5,1 1,5 8,5" fill="#a3a3a3"/></svg>
<svg class="r" style="left:1516px;top:467px" width="10" height="7"><polygon points="4.5,5 1,1 8,1" fill="#505050"/></svg>
<div class="t" style="left:1151.6px;top:83px;font-size:12px;line-height:14px;color:#1a0096;">« Earlier</div>
<div class="t" style="left:1271.5px;top:83px;font-size:12px;line-height:14px;color:#1a0096;">Now</div>
<div class="t" style="left:1315px;width:100px;text-align:right;top:83px;font-size:12px;line-height:14px;color:#1a0096;">Later »</div>
<div class="r" style="left:1151px;top:99px;width:264px;height:1px;background:#b0b0b0;"></div>
<div class="t" style="left:1152.6px;top:114px;font-size:11px;line-height:12px;letter-spacing:-0.1px;color:#555555;">From</div>
<div class="t" style="left:1267px;top:114px;font-size:11px;line-height:12px;letter-spacing:-0.1px;color:#555555;">To</div>
<div class="r" style="left:1186px;top:108px;width:76px;height:18px;box-sizing:border-box;border:1px solid #d2d0c8;border-radius:3px;background:#f9f5ea;"></div>
<div class="t" style="left:1188px;top:110px;font-size:12px;line-height:14px;color:#666;">01-09-2023</div>
<div class="r" style="left:1300px;top:108px;width:76px;height:18px;box-sizing:border-box;border:1px solid #d2d0c8;border-radius:3px;background:#f9f5ea;"></div>
<div class="t" style="left:1302px;top:110px;font-size:12px;line-height:14px;color:#666;">30-09-2023</div>
<div class="r" style="left:1428px;top:109px;width:13px;height:13px;box-sizing:border-box;border:1px solid #767676;border-radius:50%;background:#fff;"></div>
<div class="r" style="left:1428px;top:135px;width:13px;height:13px;box-sizing:border-box;border:1px solid #0075ff;border-radius:50%;background:#fff;"></div>
<div class="r" style="left:1431px;top:138px;width:7px;height:7px;border-radius:50%;background:#0075ff;"></div>
<div class="t" style="left:1152.6px;top:139px;font-size:11px;line-height:12px;letter-spacing:-0.1px;color:#555555;">Month</div>
<div class="t" style="left:1281.3px;top:139px;font-size:11px;line-height:12px;letter-spacing:-0.1px;color:#555555;">Year</div>
<div class="r" style="left:1186px;top:134px;width:90px;height:18px;box-sizing:border-box;border:1px solid #4a4a4a;border-radius:3px;background:#fff;"></div>
<div class="t" style="left:1191px;top:136px;font-size:12px;line-height:14px;color:#000;">September</div>
<svg class="r" style="left:1261px;top:139px;" width="11" height="8" viewBox="0 0 11 8"><path d="M1.3 1.6l4.200 4.300 4.200-4.300" fill="none" stroke="#000" stroke-width="1.9" stroke-linecap="round" stroke-linejoin="round"/></svg>
<div class="r" style="left:1314px;top:134px;width:90px;height:18px;box-sizing:border-box;border:1px solid #4a4a4a;border-radius:3px;background:#fff;"></div>
<div class="t" style="left:1319px;top:136px;font-size:12px;line-height:14px;color:#000;">2023</div>
<svg class="r" style="left:1389px;top:139px;" width="11" height="8" viewBox="0 0 11 8"><path d="M1.3 1.6l4.200 4.300 4.200-4.300" fill="none" stroke="#000" stroke-width="1.9" stroke-linecap="round" stroke-linejoin="round"/></svg>
<div class="t" style="left:1152.6px;top:162px;font-size:11px;line-height:12px;letter-spacing:-0.1px;color:#555555;">Person</div>
<div class="t" style="left:1273.3px;top:163px;font-size:12px;line-height:14px;color:#000;">DEL - Thomas Delta</div>
<div class="t" style="left:1152.6px;top:182px;font-size:11px;line-height:12px;letter-spacing:-0.1px;color:#555555;">Timezone</div>
<div class="r" style="left:1273px;top:183px;width:13px;height:13px;box-sizing:border-box;border:1px solid #0075ff;border-radius:50%;background:#fff;"></div>
<div class="r" style="left:1276px;top:186px;width:7px;height:7px;border-radius:50%;background:#0075ff;"></div>
<div class="t" style="left:1291.6px;top:185px;font-size:11px;line-height:12px;letter-spacing:-0.1px;color:#000;">UTC</div>
<div class="r" style="left:1324px;top:183px;width:13px;height:13px;box-sizing:border-box;border:1px solid #d0cec6;border-radius:50%;background:#f6f1e6;"></div>
<div class="t" style="left:1342px;top:185px;font-size:11px;line-height:12px;letter-spacing:-0.1px;color:#000;">Base time</div>
<div class="r" style="left:1273px;top:201px;width:13px;height:13px;box-sizing:border-box;border:1px solid #767676;border-radius:50%;background:#fff;"></div>
<div class="t" style="left:1291.6px;top:203px;font-size:11px;line-height:12px;letter-spacing:-0.1px;color:#000;">LT</div>
<div class="r" style="left:1324px;top:201px;width:13px;height:13px;box-sizing:border-box;border:1px solid #767676;border-radius:50%;background:#fff;"></div>
<div class="t" style="left:1342px;top:203px;font-size:11px;line-height:12px;letter-spacing:-0.1px;color:#000;">Selected Person Base time</div>
<div class="t" style="left:1157.3px;top:226px;font-size:12px;line-height:14px;font-weight:700;color:#000;">Aircraft</div>
<div class="r" style="left:1151px;top:245px;width:344px;height:1px;background:#b0b0b0;"></div>
<div class="t" style="left:1152.6px;top:250px;font-size:11px;line-height:12px;letter-spacing:-0.1px;color:#555555;">show flights as OBS</div>
<div class="r" style="left:1273px;top:250px;width:13px;height:13px;box-sizing:border-box;border:1px solid #767676;border-radius:2.5px;background:#fff;"></div>
<div class="t" style="left:1152.6px;top:270px;font-size:11px;line-height:12px;letter-spacing:-0.1px;color:#555555;">Show positioning</div>
<div class="r" style="left:1273px;top:270px;width:13px;height:13px;box-sizing:border-box;border:1px solid #767676;border-radius:2.5px;background:#fff;"></div>
<div class="t" style="left:1152.6px;top:289px;font-size:11px;line-height:12px;letter-spacing:-0.1px;color:#555555;">Show STD</div>
<div class="r" style="left:1273px;top:289px;width:13px;height:13px;box-sizing:border-box;border:1px solid #767676;border-radius:2.5px;background:#fff;"></div>
<div class="t" style="left:1152.6px;top:309px;font-size:11px;line-height:12px;letter-spacing:-0.1px;color:#555555;">Report check</div>
<div class="r" style="left:1273px;top:309px;width:13px;height:13px;box-sizing:border-box;border:1px solid #767676;border-radius:2.5px;background:#fff;"></div>
<div class="t" style="left:1151.4px;top:332px;font-size:11px;line-height:12px;font-weight:700;letter-spacing:-0.1px;color:#1b2a4e;">Show</div>
<div class="r" style="left:1151px;top:350px;width:13px;height:13px;border-radius:2px;background:#0075ff;"></div>
<svg class="r" style="left:1151px;top:350px;" width="13" height="13" viewBox="0 0 13 13"><path d="M2.800 6.700l2.500 2.600 4.800-6.100" fill="none" stroke="#fff" stroke-width="1.9" stroke-linecap="butt" stroke-linejoin="miter"/></svg>
<div class="t" style="left:1169.4px;top:352px;font-size:11px;line-height:12px;letter-spacing:-0.1px;color:#000;">Confirmed</div>
<div class="r" style="left:1151px;top:369px;width:13px;height:13px;border-radius:2px;background:#0075ff;"></div>
<svg class="r" style="left:1151px;top:369px;" width="13" height="13" viewBox="0 0 13 13"><path d="M2.800 6.700l2.500 2.600 4.800-6.100" fill="none" stroke="#fff" stroke-width="1.9" stroke-linecap="butt" stroke-linejoin="miter"/></svg>
<div class="t" style="left:1169.4px;top:371px;font-size:11px;line-height:12px;letter-spacing:-0.1px;color:#000;">Option</div>
<div class="t" style="left:1151.4px;top:391px;font-size:11px;line-height:12px;font-weight:700;letter-spacing:-0.1px;color:#1b2a4e;">Trip type</div>
<div class="r" style="left:1151px;top:410px;width:13px;height:13px;border-radius:2px;background:#0075ff;"></div>
<svg class="r" style="left:1151px;top:410px;" width="13" height="13" viewBox="0 0 13 13"><path d="M2.800 6.700l2.500 2.600 4.800-6.100" fill="none" stroke="#fff" stroke-width="1.9" stroke-linecap="butt" stroke-linejoin="miter"/></svg>
<div class="t" style="left:1169.4px;top:412px;font-size:11px;line-height:12px;letter-spacing:-0.1px;color:#000;">PAX Charter</div>
<div class="r" style="left:1287px;top:410px;width:13px;height:13px;border-radius:2px;background:#0075ff;"></div>
<svg class="r" style="left:1287px;top:410px;" width="13" height="13" viewBox="0 0 13 13"><path d="M2.800 6.700l2.500 2.600 4.800-6.100" fill="none" stroke="#fff" stroke-width="1.9" stroke-linecap="butt" stroke-linejoin="miter"/></svg>
<div class="t" style="left:1304.6px;top:412px;font-size:11px;line-height:12px;letter-spacing:-0.1px;color:#000;">Technical</div>
<div class="r" style="left:1369px;top:410px;width:13px;height:13px;border-radius:2px;background:#0075ff;"></div>
<svg class="r" style="left:1369px;top:410px;" width="13" height="13" viewBox="0 0 13 13"><path d="M2.800 6.700l2.500 2.600 4.800-6.100" fill="none" stroke="#fff" stroke-width="1.9" stroke-linecap="butt" stroke-linejoin="miter"/></svg>
<div class="t" style="left:1386.5px;top:412px;font-size:11px;line-height:12px;letter-spacing:-0.1px;color:#000;">Aircraft repositioning</div>
<div class="r" style="left:1151px;top:428px;width:13px;height:13px;border-radius:2px;background:#0075ff;"></div>
<svg class="r" style="left:1151px;top:428px;" width="13" height="13" viewBox="0 0 13 13"><path d="M2.800 6.700l2.500 2.600 4.800-6.100" fill="none" stroke="#fff" stroke-width="1.9" stroke-linecap="butt" stroke-linejoin="miter"/></svg>
<div class="t" style="left:1169.4px;top:430px;font-size:11px;line-height:12px;letter-spacing:-0.1px;color:#000;">Regular PAX transport</div>
<div class="r" style="left:1287px;top:428px;width:13px;height:13px;border-radius:2px;background:#0075ff;"></div>
<svg class="r" style="left:1287px;top:428px;" width="13" height="13" viewBox="0 0 13 13"><path d="M2.800 6.700l2.500 2.600 4.800-6.100" fill="none" stroke="#fff" stroke-width="1.9" stroke-linecap="butt" stroke-linejoin="miter"/></svg>
<div class="t" style="left:1304.6px;top:430px;font-size:11px;line-height:12px;letter-spacing:-0.1px;color:#000;">Ambulance</div>
<div class="r" style="left:1369px;top:428px;width:13px;height:13px;border-radius:2px;background:#0075ff;"></div>
<svg class="r" style="left:1369px;top:428px;" width="13" height="13" viewBox="0 0 13 13"><path d="M2.800 6.700l2.500 2.600 4.800-6.100" fill="none" stroke="#fff" stroke-width="1.9" stroke-linecap="butt" stroke-linejoin="miter"/></svg>
<div class="t" style="left:1386.5px;top:430px;font-size:11px;line-height:12px;letter-spacing:-0.1px;color:#000;">Frequent flyer</div>
<div class="r" style="left:1151px;top:446px;width:13px;height:13px;border-radius:2px;background:#0075ff;"></div>
<svg class="r" style="left:1151px;top:446px;" width="13" height="13" viewBox="0 0 13 13"><path d="M2.800 6.700l2.500 2.600 4.800-6.100" fill="none" stroke="#fff" stroke-width="1.9" stroke-linecap="butt" stroke-linejoin="miter"/></svg>
<div class="t" style="left:1169.4px;top:448px;font-size:11px;line-height:12px;letter-spacing:-0.1px;color:#000;">Flight for owner</div>
<div class="r" style="left:1287px;top:446px;width:13px;height:13px;border-radius:2px;background:#0075ff;"></div>
<svg class="r" style="left:1287px;top:446px;" width="13" height="13" viewBox="0 0 13 13"><path d="M2.800 6.700l2.500 2.600 4.800-6.100" fill="none" stroke="#fff" stroke-width="1.9" stroke-linecap="butt" stroke-linejoin="miter"/></svg>
<div class="t" style="left:1304.6px;top:448px;font-size:11px;line-height:12px;letter-spacing:-0.1px;color:#000;">Other</div>
<div class="r" style="left:1369px;top:446px;width:13px;height:13px;border-radius:2px;background:#0075ff;"></div>
<svg class="r" style="left:1369px;top:446px;" width="13" height="13" viewBox="0 0 13 13"><path d="M2.800 6.700l2.500 2.600 4.800-6.100" fill="none" stroke="#fff" stroke-width="1.9" stroke-linecap="butt" stroke-linejoin="miter"/></svg>
<div class="t" style="left:1386.5px;top:448px;font-size:11px;line-height:12px;letter-spacing:-0.1px;color:#000;">State</div>
<div class="r" style="left:1151px;top:465px;width:13px;height:13px;border-radius:2px;background:#0075ff;"></div>
<svg class="r" style="left:1151px;top:465px;" width="13" height="13" viewBox="0 0 13 13"><path d="M2.800 6.700l2.500 2.600 4.800-6.100" fill="none" stroke="#fff" stroke-width="1.9" stroke-linecap="butt" stroke-linejoin="miter"/></svg>
<div class="t" style="left:1169.4px;top:467px;font-size:11px;line-height:12px;letter-spacing:-0.1px;color:#000;">Training</div>
<div class="r" style="left:1287px;top:465px;width:13px;height:13px;border-radius:2px;background:#0075ff;"></div>
<svg class="r" style="left:1287px;top:465px;" width="13" height="13" viewBox="0 0 13 13"><path d="M2.800 6.700l2.500 2.600 4.800-6.100" fill="none" stroke="#fff" stroke-width="1.9" stroke-linecap="butt" stroke-linejoin="miter"/></svg>
<div class="t" style="left:1304.6px;top:467px;font-size:11px;line-height:12px;letter-spacing:-0.1px;color:#000;">Cargo</div>
<div class="r" style="left:1133px;top:477px;width:395px;height:1px;background:#ffffe6;"></div>
<div class="r" style="left:1131px;top:478px;width:397px;height:2px;background:#1f538f;"></div>
<div class="r" style="left:1528px;top:478px;width:2px;height:2px;background:#2f639a;"></div>
<div class="r" style="left:1130px;top:480px;width:400px;height:20px;background:#fff;"></div>
</body></html>
